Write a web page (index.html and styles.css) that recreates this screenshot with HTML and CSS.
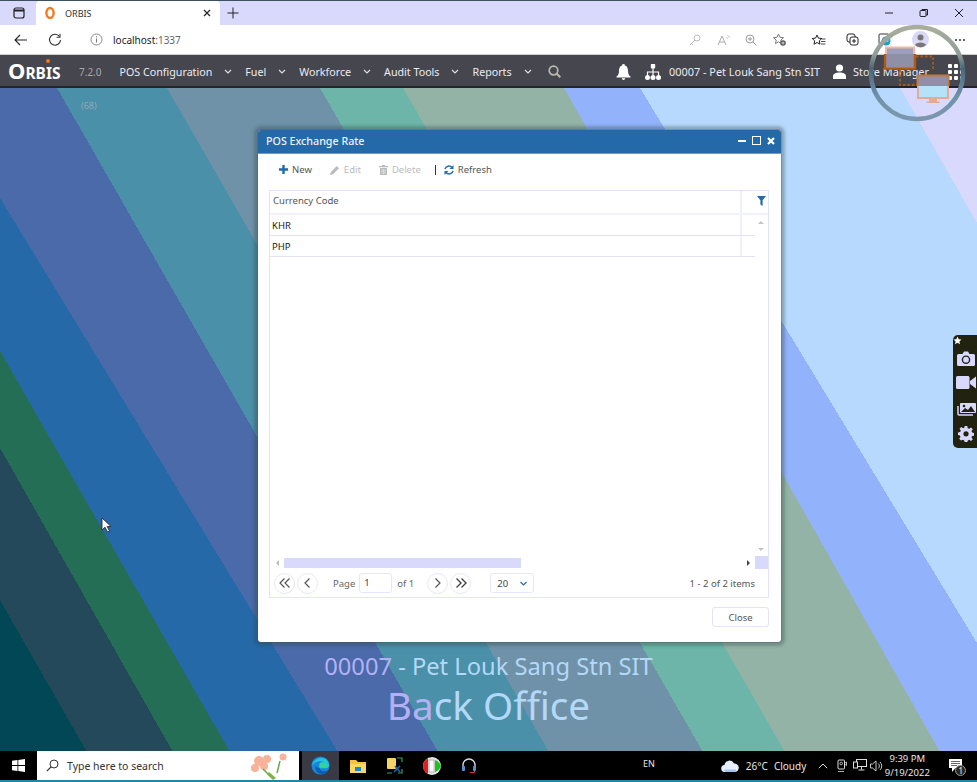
FILE: index.html
```html
<!DOCTYPE html>
<html lang="en">
<head>
<meta charset="utf-8">
<title>ORBIS</title>
<link rel="stylesheet" href="styles.css">
</head>
<body>
<div class="screen">
  <header class="tabstrip">
    <svg class="ts-panel" width="12" height="12" viewBox="0 0 12 12"><rect x="1" y="1" width="10" height="10" rx="2" fill="none" stroke="#222" stroke-width="1.2"/><path d="M1 3.5h10" stroke="#222" stroke-width="2"/></svg>
    <div class="tab">
      <svg class="tab-o" width="12" height="14" viewBox="0 0 12 14"><ellipse cx="6" cy="7" rx="3.6" ry="5" fill="none" stroke="#f47a20" stroke-width="2.4"/></svg>
      <span class="tab-title">ORBIS</span>
      <svg class="tab-x" width="8" height="8" viewBox="0 0 8 8"><path d="M1 1l6 6M7 1l-6 6" stroke="#222" stroke-width="1.2"/></svg>
    </div>
    <svg class="ts-plus" width="12" height="12" viewBox="0 0 12 12"><path d="M6 .5v11M.5 6h11" stroke="#222" stroke-width="1"/></svg>
    <div class="winctl">
      <svg width="10" height="10" viewBox="0 0 10 10"><path d="M1 5h8" stroke="#222"/></svg>
      <svg width="10" height="10" viewBox="0 0 10 10"><rect x="1" y="2.5" width="6" height="6" rx="1" fill="none" stroke="#222"/><path d="M3 2.5V1.5h5.5V7H7" fill="none" stroke="#222"/></svg>
      <svg width="10" height="10" viewBox="0 0 10 10"><path d="M1 1l8 8M9 1l-8 8" stroke="#222"/></svg>
    </div>
  </header>

  <div class="addressbar">
    <svg class="ab-back" width="14" height="12" viewBox="0 0 14 12"><path d="M13 6H1M6 1L1 6l5 5" fill="none" stroke="#222" stroke-width="1.1"/></svg>
    <svg class="ab-reload" width="14" height="14" viewBox="0 0 14 14"><path d="M11.5 3.5A5.5 5.5 0 1 0 12.5 7" fill="none" stroke="#333" stroke-width="1.1"/><path d="M12 .8v3.4H8.6" fill="none" stroke="#333" stroke-width="1.1"/></svg>
    <svg class="ab-info" width="13" height="13" viewBox="0 0 13 13"><circle cx="6.5" cy="6.5" r="5.5" fill="none" stroke="#888"/><path d="M6.5 5.5v4M6.5 3.2v1.2" stroke="#777"/></svg>
    <span class="url">localhost<span class="url-port">:1337</span></span>
    <div class="ab-tools">
      <svg class="t-key" width="12" height="12" viewBox="0 0 12 12"><circle cx="8" cy="4" r="3" fill="none" stroke="#bbb"/><path d="M6 6L1 11M2.500 9.500l1.500 1.500" stroke="#bbb" fill="none"/></svg>
      <svg class="t-a" width="14" height="12" viewBox="0 0 14 12"><path d="M1 11L5 2l4 9M2.500 8h5" fill="none" stroke="#aaa"/><path d="M9 3a3 3 0 0 1 2 2M10 1a5 5 0 0 1 3 3" fill="none" stroke="#bbb" stroke-width=".8"/></svg>
      <svg class="t-zoom" width="12" height="12" viewBox="0 0 12 12"><circle cx="5" cy="5" r="4" fill="none" stroke="#999"/><path d="M8 8l3.500 3.500M3 5h4M5 3v4" stroke="#999"/></svg>
      <svg class="t-fav" width="13" height="13" viewBox="0 0 13 13"><path d="M5.500 1l1.500 3.300 3.500.4-2.600 2.400.7 3.500-3.100-1.800-3 1.800.7-3.500L.5 4.700 4 4.300z" fill="none" stroke="#777"/><circle cx="10" cy="10" r="2.800" fill="#555"/><path d="M8.500 10h3M10 8.500v3" stroke="#fff" stroke-width=".7"/></svg>
      <svg class="t-favs" width="14" height="12" viewBox="0 0 14 12"><path d="M5 1l1.400 3.100 3.400.4-2.500 2.300.7 3.400L5 8.500 2 10.200l.7-3.400L.2 4.500l3.400-.4z" fill="none" stroke="#222"/><path d="M9.500 5H13.500M9 7.500h4.500M9 10h4.500" stroke="#222" stroke-width=".8"/></svg>
      <svg class="t-coll" width="13" height="13" viewBox="0 0 13 13"><rect x="1" y="1" width="8" height="8" rx="2" fill="none" stroke="#222"/><rect x="4" y="4" width="8" height="8" rx="2" fill="#fff" stroke="#222"/><path d="M8 6v4M6 8h4" stroke="#222"/></svg>
      <svg class="t-ie" width="14" height="14" viewBox="0 0 14 14"><rect x="1" y="1" width="10" height="10" rx="1" fill="none" stroke="#333"/><circle cx="8" cy="8" r="4.500" fill="#1b9ad6"/><path d="M5.500 8h5" stroke="#fff"/></svg>
      <svg class="t-prof" width="17" height="17" viewBox="0 0 17 17"><circle cx="8.500" cy="8.500" r="8.500" fill="#d9d9f5"/><circle cx="8.500" cy="6.500" r="3" fill="#777"/><path d="M3 14c1-3.500 10-3.500 11 0a8 8 0 0 1-11 0z" fill="#777"/></svg>
      <svg class="t-more" width="12" height="4" viewBox="0 0 12 4"><g fill="#333"><circle cx="2" cy="2" r="1"/><circle cx="6" cy="2" r="1"/><circle cx="10" cy="2" r="1"/></g></svg>
    </div>
  </div>

  <nav class="appnav">
    <div class="logo">O<span class="logo-rest">RBIS</span><i class="logo-dot"></i></div>
    <span class="version">7.2.0</span>
    <div class="menu">
      <a class="menu-item">POS Configuration<svg class="chev" width="8" height="5" viewBox="0 0 8 5"><path d="M1 1l3 3 3-3" fill="none" stroke="#ddd" stroke-width="1.2"/></svg></a>
      <a class="menu-item">Fuel<svg class="chev" width="8" height="5" viewBox="0 0 8 5"><path d="M1 1l3 3 3-3" fill="none" stroke="#ddd" stroke-width="1.2"/></svg></a>
      <a class="menu-item">Workforce<svg class="chev" width="8" height="5" viewBox="0 0 8 5"><path d="M1 1l3 3 3-3" fill="none" stroke="#ddd" stroke-width="1.2"/></svg></a>
      <a class="menu-item">Audit Tools<svg class="chev" width="8" height="5" viewBox="0 0 8 5"><path d="M1 1l3 3 3-3" fill="none" stroke="#ddd" stroke-width="1.2"/></svg></a>
      <a class="menu-item">Reports<svg class="chev" width="8" height="5" viewBox="0 0 8 5"><path d="M1 1l3 3 3-3" fill="none" stroke="#ddd" stroke-width="1.2"/></svg></a>
      <svg class="nav-search" width="13" height="13" viewBox="0 0 13 13"><circle cx="5.500" cy="5.500" r="4.300" fill="none" stroke="#b9b9a8" stroke-width="1.700"/><path d="M8.500 8.500l3.800 3.800" stroke="#b9b9a8" stroke-width="2"/></svg>
    </div>
    <div class="nav-right">
      <svg class="nav-bell" width="15" height="16" viewBox="0 0 15 16"><path d="M7.500 0a1.300 1.300 0 0 1 1.300 1.500C11.500 2.200 12 5 12 7c0 3 1 4.500 2.500 5.500v1H.5v-1C2 11.500 3 10 3 7c0-2 .5-4.800 3.200-5.500A1.300 1.300 0 0 1 7.500 0zM5.800 14.300h3.400a1.700 1.700 0 0 1-3.400 0z" fill="#fff"/></svg>
      <svg class="nav-org" width="16" height="16" viewBox="0 0 16 16"><g fill="#fff"><rect x="5.800" y="0" width="4.400" height="4.400" rx=".8"/><circle cx="2.500" cy="13.500" r="2.500"/><circle cx="8" cy="13.500" r="2.500"/><circle cx="13.500" cy="13.500" r="2.500"/></g><path d="M8 4v7M2.500 11V8h11v3" fill="none" stroke="#fff" stroke-width="1.200"/></svg>
      <span class="nav-store">00007 - Pet Louk Sang Stn SIT</span>
      <svg class="nav-user" width="13" height="15" viewBox="0 0 13 15"><circle cx="6.500" cy="4" r="3.600" fill="#fff"/><path d="M0 15v-2.500C0 9.500 3 8.500 6.500 8.500S13 9.500 13 12.500V15z" fill="#fff"/></svg>
      <span class="nav-role">Store Manager</span>
      <div class="nav-apps"><i></i><i></i><i></i><i></i><i></i><i></i><i></i><i></i><i></i></div>
    </div>
  </nav>

  <main class="desktop">
    <svg class="wallpaper" viewBox="0 0 977 664" preserveAspectRatio="none" shape-rendering="crispEdges">
      <rect width="977" height="664" fill="#d9d8fd"/>
      <polygon points="0,0 900,0 977,135 977,664 0,664" fill="#b6d9fd"/>
      <polygon points="0,0 640,0 977,555 977,664 0,664" fill="#92b2fb"/>
      <polygon points="0,0 564,0 940,664 0,664" fill="#93b3a7"/>
      <polygon points="0,0 403,0 785,664 0,664" fill="#6cb5a8"/>
      <polygon points="0,0 320,0 703,664 0,664" fill="#6f92a9"/>
      <polygon points="0,0 167,0 549,664 0,664" fill="#4a90a9"/>
      <polygon points="0,0 57,0 438,664 0,664" fill="#4a6aa9"/>
      <polygon points="0,110 338,664 0,664" fill="#2569a9"/>
      <polygon points="0,263 230,664 0,664" fill="#246e55"/>
      <polygon points="0,360 173,664 0,664" fill="#24495a"/>
      <polygon points="0,512 87,664 0,664" fill="#024755"/>
    </svg>

    <span class="count">(68)</span>

    <div class="brand">
      <div class="brand-store"><span class="tint">00007</span> - Pet Louk Sang Stn SIT</div>
      <div class="brand-app"><span class="tint">Ba</span>ck Office</div>
    </div>

    <section class="dialog">
      <div class="dlg-head">
        <span class="dlg-title">POS Exchange Rate</span>
        <div class="dlg-ctl">
          <svg width="8" height="8" viewBox="0 0 8 8"><path d="M0 4h8" stroke="#fff" stroke-width="2"/></svg>
          <svg width="9" height="9" viewBox="0 0 9 9"><rect x=".5" y=".5" width="8" height="8" fill="none" stroke="#fff"/></svg>
          <svg width="8" height="8" viewBox="0 0 8 8"><path d="M1 1l6 6M7 1l-6 6" stroke="#fff" stroke-width="2.200"/></svg>
        </div>
      </div>
      <div class="dlg-body">
        <div class="actions">
          <span class="act"><svg width="9" height="9" viewBox="0 0 9 9"><path d="M4.500 0v9M0 4.500h9" stroke="#246aa8" stroke-width="2.400"/></svg>New</span>
          <span class="act off"><svg width="10" height="10" viewBox="0 0 10 10"><path d="M0 10l.8-3L6.800 1 9 3.200l-6 6z" fill="#bbb"/></svg>Edit</span>
          <span class="act off"><svg width="9" height="10" viewBox="0 0 9 10"><path d="M3 0h3v1h3v1.200H0V1h3zM1 3h7v7H1z" fill="#bbb"/><path d="M3 4v5M4.500 4v5M6 4v5" stroke="#fff" stroke-width=".5"/></svg>Delete</span>
          <i class="act-sep"></i>
          <span class="act"><svg width="10" height="10" viewBox="0 0 10 10"><path d="M1 4.200A4 4 0 0 1 8 2.500M9 5.800A4 4 0 0 1 2 7.500" fill="none" stroke="#246aa8" stroke-width="1.500"/><path d="M9.500 0v4h-4zM.5 10V6h4z" fill="#246aa8"/></svg>Refresh</span>
        </div>

        <div class="grid">
          <div class="grid-head">
            <span class="cell-head">Currency Code</span>
            <span class="filter-cell"><svg width="9" height="10" viewBox="0 0 9 10"><path d="M0 0h9L5.600 4.200V10L3.400 8.500V4.200z" fill="#246aa8"/></svg></span>
          </div>
          <div class="grid-main">
            <div class="rows">
              <div class="row"><span class="cell">KHR</span><span class="cell-fill"></span></div>
              <div class="row"><span class="cell">PHP</span><span class="cell-fill"></span></div>
            </div>
            <div class="vscroll"><i class="arr-up"></i><i class="arr-down"></i></div>
          </div>
          <div class="hscroll">
            <i class="arr-left"></i>
            <span class="thumb-track"><i class="thumb"></i></span>
            <i class="arr-right"></i>
            <i class="corner"></i>
          </div>
          <div class="pager">
            <button class="pg"><svg width="12" height="10" viewBox="0 0 12 10"><path d="M5.500 .5L1 5l4.500 4.500M10.500 .5L6 5l4.500 4.500" fill="none" stroke="#555" stroke-width="1.200"/></svg></button>
            <button class="pg"><svg width="7" height="10" viewBox="0 0 7 10"><path d="M5.500 .5L1 5l4.500 4.500" fill="none" stroke="#555" stroke-width="1.200"/></svg></button>
            <span class="pg-label">Page</span>
            <span class="pg-input">1</span>
            <span class="pg-of">of 1</span>
            <button class="pg pg-next"><svg width="7" height="10" viewBox="0 0 7 10"><path d="M1.500 .5L6 5l-4.500 4.500" fill="none" stroke="#555" stroke-width="1.200"/></svg></button>
            <button class="pg"><svg width="12" height="10" viewBox="0 0 12 10"><path d="M1.500 .5L6 5l-4.500 4.500M6.500 .5L11 5l-4.500 4.500" fill="none" stroke="#444" stroke-width="1.400"/></svg></button>
            <span class="pg-size">20<svg width="7" height="5" viewBox="0 0 7 5"><path d="M.5 1L3.500 4 6.500 1" fill="none" stroke="#246aa8" stroke-width="1.200"/></svg></span>
            <span class="pg-info">1 - 2 of 2 items</span>
          </div>
        </div>

        <div class="dlg-foot"><button class="btn-close">Close</button></div>
      </div>
    </section>

    <aside class="sidetools">
      <span class="st-pin"><svg width="9" height="9" viewBox="0 0 9 9"><path d="M4.500 .5l1.200 2.700 2.800.3-2.100 1.900.6 2.800-2.500-1.400-2.500 1.400.6-2.800L.5 3.500l2.800-.3z" fill="#fff"/></svg></span>
      <svg width="18" height="15" viewBox="0 0 18 15"><path d="M1.500 3h4l1.500-2.500h4L12.500 3h4A1.500 1.500 0 0 1 18 4.500v9a1.500 1.500 0 0 1-1.500 1.500h-15A1.500 1.500 0 0 1 0 13.500v-9A1.500 1.500 0 0 1 1.500 3z" fill="#d9d8fd"/><circle cx="9" cy="8.700" r="3.600" fill="none" stroke="#222210" stroke-width="1.400"/></svg>
      <svg width="20" height="13" viewBox="0 0 20 13"><rect width="13.500" height="13" rx="1.500" fill="#d9d8fd"/><path d="M14 5l6-4.500v12L14 8z" fill="#d9d8fd"/></svg>
      <svg width="19" height="16" viewBox="0 0 19 16"><path d="M4 3h14a1 1 0 0 1 1 1v8a1 1 0 0 1-1 1H4a1 1 0 0 1-1-1V4a1 1 0 0 1 1-1z" fill="#d9d8fd"/><path d="M4 12l4-4 3 2 3-4 4 6z" fill="#222210"/><circle cx="7" cy="6" r="1.300" fill="#222210"/><path d="M1 6v8a1 1 0 0 0 1 1h14" fill="none" stroke="#d9d8fd" stroke-width="1.500"/></svg>
      <svg width="16" height="16" viewBox="0 0 16 16"><path d="M6.700 0h2.600l.4 2.200 1.500.6 1.800-1.300 1.800 1.800-1.300 1.800.6 1.500 2.200.4v2.600l-2.200.4-.6 1.500 1.300 1.800-1.800 1.800-1.800-1.300-1.500.6-.4 2.200H6.700l-.4-2.200-1.500-.6L3 14.500l-1.800-1.800 1.300-1.800-.6-1.500L0 9V6.400l2.200-.4.600-1.500L1.500 2.700 3.300.9l1.800 1.300 1.200-.5z" fill="#d9d8fd"/><circle cx="8" cy="7.800" r="2.600" fill="#222210"/></svg>
    </aside>

    <svg class="cursor" width="11" height="16" viewBox="0 0 11 16"><path d="M1 1v12l3-2.800L6.500 15l2-1-2.300-4.500H10z" fill="#fff" stroke="#222" stroke-width=".8"/></svg>
  </main>

  <footer class="taskbar">
    <svg class="tb-win" width="13" height="13" viewBox="0 0 13 13"><path d="M0 1.800L5.500 1v5H0zM6.300.9L13 0v6H6.300zM0 7h5.500v5L0 11.200zM6.300 7H13v6l-6.700-.9z" fill="#fff"/></svg>
    <div class="tb-search">
      <svg width="13" height="13" viewBox="0 0 13 13"><circle cx="8" cy="5" r="4" fill="none" stroke="#333"/><path d="M5 8l-4.200 4.200" stroke="#333" stroke-width="1.100"/></svg>
      <span class="tb-search-text">Type here to search</span>
      <svg class="tb-flower" width="46" height="27" viewBox="0 0 46 27"><g fill="#f6b39a"><circle cx="14" cy="8" r="5"/><circle cx="22" cy="6" r="4"/><circle cx="10" cy="15" r="4"/><circle cx="19" cy="13" r="4"/><circle cx="38" cy="4" r="3.500"/></g><path d="M18 16l9 9M35 8l-3 12" stroke="#6aa84f" stroke-width="1.500" fill="none"/><path d="M24 19l7 6-3 2-6-6z" fill="#7cb342"/></svg>
    </div>
    <div class="tb-app tb-active">
      <svg width="19" height="19" viewBox="0 0 20 20"><circle cx="10" cy="10" r="9.500" fill="#1787d8"/><path d="M1 10C2 4 9 0 15 3c3 2 4 5 4 7 0 2-2 3-4 3H9c-1-3 1-6 5-6-4-3-10-1-13 3z" fill="#22c3e6"/><path d="M9 12.500c.5 3 5 5 9 2.500-2 4-6 4.500-9 3.500-3-1-5-4-4-8 .5 1 2 2 4 2z" fill="#0c5fb0"/><path d="M9 8c1-2 5-2 7 0 1 1 2 3 1 4H9.500C8.500 11 8.500 9 9 8z" fill="#36d29c"/></svg>
    </div>
    <div class="tb-app">
      <svg width="16" height="14" viewBox="0 0 16 14"><path d="M0 1h6l2 2h8v11H0z" fill="#f5c242"/><path d="M0 5h16v9H0z" fill="#fbd766"/><rect x="5" y="8" width="6" height="4" fill="#1b87c9"/></svg>
    </div>
    <div class="tb-app">
      <svg width="17" height="17" viewBox="0 0 17 17"><rect x="1" y="1" width="9" height="11" rx="1" fill="#f5d36a"/><path d="M11 1h5v4M1 16h5M16 12v4h-4" fill="none" stroke="#2f9e6a" stroke-width="1.200"/><path d="M8 15l6-6M9 9l5 6" stroke="#1b5fa8" stroke-width="1.600"/></svg>
    </div>
    <div class="tb-app">
      <svg width="18" height="18" viewBox="0 0 18 18"><circle cx="9" cy="9" r="9" fill="#e8e8e8"/><path d="M9 0a9 9 0 0 0-9 9 9 9 0 0 0 5 8V0z" fill="#e02020"/><path d="M12 3a9 9 0 0 1 6 6 9 9 0 0 1-6 6z" fill="#20c020"/><rect x="6" y="3" width="5" height="12" fill="#fff" stroke="#888" stroke-width=".6"/></svg>
    </div>
    <div class="tb-app">
      <svg width="16" height="18" viewBox="0 0 16 18"><path d="M2 11V8a6 6 0 0 1 12 0v3" fill="none" stroke="#d8d8e8" stroke-width="1.400"/><rect x="1" y="9" width="3" height="5" rx="1" fill="#5b8fd8"/><rect x="12" y="9" width="3" height="5" rx="1" fill="#5b8fd8"/><path d="M13.500 14v1.500H9" fill="none" stroke="#d84040"/></svg>
    </div>
    <span class="tb-lang">EN</span>
    <svg class="tb-cloud" width="18" height="12" viewBox="0 0 18 12"><path d="M4 12a3.500 3.500 0 0 1-.5-7A5 5 0 0 1 13 3.500 4.200 4.200 0 0 1 14 12z" fill="#e8f0fc"/><path d="M3 9.500h12V12H4a3.500 3.500 0 0 1-1-2.500z" fill="#9cc6f5"/></svg>
    <span class="tb-temp">26°C</span>
    <span class="tb-weather">Cloudy</span>
    <svg class="tb-tray-chev" width="10" height="6" viewBox="0 0 10 6"><path d="M.8 5.200L5 1l4.200 4.200" fill="none" stroke="#ddd"/></svg>
    <svg class="tb-meet" width="10" height="14" viewBox="0 0 10 14"><rect x="1" y="1" width="6.500" height="9" rx="1" fill="none" stroke="#ddd"/><circle cx="4.200" cy="4.500" r="1.300" fill="none" stroke="#ddd" stroke-width=".8"/><path d="M8 4l1.500-1v3.500L8 5.500M1 12.500h6" fill="none" stroke="#ddd" stroke-width=".8"/></svg>
    <svg class="tb-net" width="14" height="13" viewBox="0 0 14 13"><rect x="3.500" y=".5" width="10" height="7" fill="none" stroke="#ddd"/><rect x=".5" y="3" width="4" height="6" fill="#000" stroke="#ddd"/><path d="M8.500 8v2.500M5.500 11h6" stroke="#ddd"/></svg>
    <svg class="tb-vol" width="13" height="12" viewBox="0 0 13 12"><path d="M.5 4h2L6 1v10L2.500 8h-2z" fill="none" stroke="#ddd" stroke-width=".9"/><path d="M8 3.500a3 3 0 0 1 0 5M10 2a5.500 5.500 0 0 1 0 8" fill="none" stroke="#ddd" stroke-width=".9"/></svg>
    <div class="tb-clock"><span>9:39 PM</span><span>9/19/2022</span></div>
    <div class="tb-notif">
      <svg width="13" height="13" viewBox="0 0 13 13"><path d="M0 0h13v9H6.500L3 13V9H0z" fill="#fff"/><path d="M2 2.500h9M2 4.500h9M2 6.500h6" stroke="#000" stroke-width=".6"/></svg>
      <span class="tb-badge">1</span>
    </div>
  </footer>

  <svg class="overlay-logo" width="100" height="100" viewBox="0 0 100 100">
    <defs>
      <linearGradient id="ring" x1="0" y1="0" x2="0" y2="1">
        <stop offset="0" stop-color="#a9ad9e"/><stop offset=".3" stop-color="#8f9e96"/>
        <stop offset=".45" stop-color="#4b6678"/><stop offset=".75" stop-color="#6f92a9"/><stop offset="1" stop-color="#7d97ad"/>
      </linearGradient>
    </defs>
    <circle cx="50" cy="50" r="46" fill="none" stroke="url(#ring)" stroke-width="4.500"/>
    <rect x="19" y="24.500" width="28" height="20" fill="#9d9dbd" stroke="#f0b8a0" stroke-width="2"/>
    <rect x="19" y="31" width="28" height="13" fill="#8f8fa8"/>
    <path d="M18 31v14.500h30V31" fill="none" stroke="#b15a10" stroke-width="2.400"/>
    <path d="M49 33.500H66V46M33 47V62H50" fill="none" stroke="#b15a10" stroke-width="1.800" stroke-dasharray="2.500 2"/>
    <rect x="51" y="53" width="30" height="22" fill="#b5e2f8" stroke="#e5ab92" stroke-width="2"/>
    <rect x="51" y="53" width="30" height="10" fill="#8f8fa8"/>
    <path d="M50.500 63V52.500H81.500V63" fill="none" stroke="#c47a3c" stroke-width="2"/>
    <path d="M62 76h8v2.500h2.500V80h-13v-1.500H62z" fill="#e5ab92"/>
  </svg>
</div>
</body>
</html>
```
FILE: styles.css
```css
* { box-sizing: border-box; }
html, body { margin: 0; padding: 0; }
body {
  width: 977px;
  height: 782px;
  overflow: hidden;
  font-family: "Noto Sans", sans-serif;
  font-size: 10px;
  color: #444;
}
svg { flex: none; display: block; }
button { font-family: inherit; }

.screen { position: relative; width: 977px; height: 782px; display: flex; flex-direction: column; overflow: hidden; }

/* Tab strip */
.tabstrip {
  height: 25px;
  flex: none;
  background: #d9d9fc;
  border-top: 1px solid #3d5060;
  display: flex;
  align-items: center;
  padding-left: 13px;
}
.tab {
  width: 184px;
  height: 24px;
  margin-left: 11px;
  background: #fff;
  border-radius: 4px 4px 0 0;
  display: flex;
  align-items: center;
  padding: 0 9px 0 8px;
}
.tab-o { margin-right: 9px; }
.tab-title { font-size: 9px; color: #333; flex: 1; }
.ts-plus { margin-left: 7px; }
.winctl { margin-left: auto; display: flex; gap: 25px; padding-right: 13px; }

/* Address bar */
.addressbar {
  height: 30px;
  flex: none;
  background: #fff;
  border-bottom: 1px solid #cfcfc8;
  display: flex;
  align-items: center;
  padding-left: 14px;
}
.ab-reload { margin-left: 20px; }
.ab-info { margin-left: 28px; }
.url { margin-left: 10px; font-size: 10px; color: #222; }
.url-port { color: #666; }
.ab-tools { margin-left: auto; display: flex; align-items: center; }
.t-key { margin-right: 16px; }
.t-a { margin-right: 14px; }
.t-zoom { margin-right: 16px; }
.t-fav { margin-right: 26px; }
.t-favs { margin-right: 20px; }
.t-coll { margin-right: 19px; }
.t-ie { margin-right: 20px; }
.t-prof { margin-right: 25px; }
.t-more { margin-right: 11px; }

/* App nav */
.appnav {
  height: 33px;
  flex: none;
  background: #46464f;
  border-bottom: 2px solid #23232a;
  display: flex;
  align-items: center;
  padding: 2px 0 0 8px;
  color: #ececf2;
  font-size: 10.7px;
}
.logo {
  position: relative;
  width: 53px;
  font-size: 22px;
  font-weight: 700;
  line-height: 24px;
  color: #fff;
}
.logo-rest { font-size: 15.5px; font-weight: 700; }
.logo-dot {
  position: absolute;
  left: 38px;
  top: 1px;
  width: 4px;
  height: 4px;
  border-radius: 50%;
  background: #f47a20;
}
.version { margin-left: 18px; font-size: 10px; color: #a8a8a8; }
.menu { display: flex; align-items: center; margin-left: 18px; }
.menu-item { display: flex; align-items: center; gap: 12px; margin-right: 13px; white-space: nowrap; }
.nav-search { margin-left: 3px; }
.nav-right { display: flex; align-items: center; margin-left: auto; padding-right: 13px; font-size: 10.9px; }
.nav-org { margin-left: 14px; }
.nav-store { margin-left: 8px; white-space: nowrap; }
.nav-user { margin-left: 13px; }
.nav-role { margin-left: 7px; white-space: nowrap; }
.nav-apps {
  margin-left: 19px;
  display: grid;
  grid-template-columns: repeat(3, 4px);
  gap: 2px;
}
.nav-apps i { width: 4px; height: 4px; background: #fff; border-radius: 1px; }

/* Desktop */
.desktop { position: relative; flex: 1; min-height: 0; overflow: hidden; }
.wallpaper { position: absolute; left: 0; top: 0; width: 977px; height: 664px; }
.count { position: absolute; left: 81px; top: 11px; font-size: 9px; color: #8eaaba; }

.brand { position: absolute; left: 0; right: 0; top: 563px; text-align: center; color: #b3d8f8; }
.brand-store { font-size: 23.7px; line-height: 30px; }
.brand-app { font-size: 38.7px; line-height: 48px; }
.tint { color: #b4b0f4; }

.dialog {
  position: absolute;
  left: 258px;
  top: 42px;
  width: 523px;
  height: 512px;
  background: #fff;
  border-radius: 3px;
  box-shadow: 0 0 0 1px rgba(60, 80, 80, .25), 0 0 3px 4px rgba(50, 70, 70, .33);
  display: flex;
  flex-direction: column;
}
.dlg-head {
  height: 24px;
  flex: none;
  background: #246aa8;
  border-bottom: 1px solid #6aa0c8;
  border-radius: 3px 3px 0 0;
  display: flex;
  align-items: center;
  padding: 0 6px 2px 8px;
  color: #f2f2fa;
}
.dlg-title { font-size: 10.7px; font-weight: 500; flex: 1; }
.dlg-ctl { display: flex; align-items: center; gap: 6px; }
.dlg-body { flex: 1; min-height: 0; display: flex; flex-direction: column; padding: 0 12px 15px 11px; }

.actions { height: 36px; flex: none; display: flex; align-items: center; padding: 0 0 5px 10px; font-size: 9.5px; color: #555; }
.act { display: flex; align-items: center; gap: 4px; margin-right: 18px; }
.act.off { color: #bbb; }
.act-sep { width: 1px; height: 10px; background: #333; margin-right: 8px; margin-left: -4px; }

.grid { height: 408px; flex: none; border: 1px solid #e3e3fb; display: flex; flex-direction: column; }
.grid-head { height: 24px; flex: none; display: flex; border-bottom: 2px solid #f2f2fe; }
.cell-head { flex: 1; padding: 3px 0 0 3px; font-size: 9.5px; color: #555; }
.filter-cell { width: 28px; border-left: 2px solid #efeffd; display: flex; justify-content: flex-end; padding: 5px 2px 0 0; }
.grid-main { flex: 1; min-height: 0; display: flex; }
.rows { flex: 1; }
.row { height: 21px; display: flex; align-items: stretch; border-bottom: 1px solid #e2e1f5; }
.cell { flex: 1; padding-left: 2px; font-size: 9.5px; line-height: 21px; color: #222; }
.cell-fill { width: 15px; border-left: 2px solid #efeffd; }
.vscroll { width: 13px; position: relative; }
.arr-up, .arr-down, .arr-left, .arr-right { display: block; width: 0; height: 0; border-style: solid; }
.arr-up { position: absolute; left: 3px; top: 6px; border-width: 0 3px 3px; border-color: transparent transparent #c4c4bc; }
.arr-down { position: absolute; left: 3px; bottom: 5px; border-width: 3px 3px 0; border-color: #c4c4bc transparent transparent; }

.hscroll { height: 13px; flex: none; display: flex; align-items: center; }
.arr-left { margin-left: 6px; border-width: 3px 3px 3px 0; border-color: transparent #bcbcb4 transparent transparent; }
.thumb-track { flex: 1; margin-left: 5px; height: 10px; }
.thumb { display: block; width: 237px; height: 10px; background: #d9d9fc; }
.arr-right { margin-right: 5px; border-width: 3px 0 3px 3px; border-color: transparent transparent transparent #444; }
.corner { width: 13px; height: 13px; background: #d9d9fc; }

.pager { height: 28px; flex: none; display: flex; align-items: center; padding: 0 13px 0 4px; font-size: 9.5px; color: #666; }
.pg {
  width: 21px;
  height: 21px;
  flex: none;
  padding: 0;
  margin-right: 2px;
  border: 1px solid #e6e6fb;
  border-radius: 50%;
  background: #fff;
  display: flex;
  align-items: center;
  justify-content: center;
}
.pg-label { margin-left: 13px; }
.pg-input { width: 33px; height: 20px; margin-left: 4px; border: 1px solid #e6e6fb; border-radius: 3px; padding: 2px 0 0 4px; color: #444; }
.pg-of { margin-left: 5px; }
.pg-next { margin-left: 13px; }
.pg-size {
  width: 44px;
  height: 20px;
  margin-left: 17px;
  border: 1px solid #e6e6fb;
  border-radius: 3px;
  display: flex;
  align-items: center;
  justify-content: space-between;
  padding: 0 6px 0 6px;
  color: #444;
}
.pg-info { margin-left: auto; color: #555; }

.dlg-foot { flex: 1; display: flex; justify-content: flex-end; align-items: flex-end; }
.btn-close { width: 57px; height: 20px; padding: 0; border: 1px solid #e3e3fb; border-radius: 3px; background: #fff; font-size: 9.5px; color: #555; }

.sidetools {
  position: absolute;
  right: 0;
  top: 247px;
  width: 24px;
  height: 113px;
  background: #222210;
  border-radius: 5px 0 0 5px;
  display: flex;
  flex-direction: column;
  align-items: center;
  justify-content: space-around;
  padding: 11px 0 1px 2px;
}
.st-pin { position: absolute; left: 0; top: 1px; }
.cursor { position: absolute; left: 101px; top: 429px; }

/* Taskbar */
.taskbar {
  height: 31px;
  flex: none;
  background: #000;
  border-bottom: 2px solid #1f88a0;
  display: flex;
  align-items: center;
  color: #e6e6e6;
  font-size: 10px;
}
.tb-win { margin-left: 12px; }
.tb-search {
  width: 262px;
  height: 29px;
  flex: none;
  margin-left: 12px;
  background: #fff;
  display: flex;
  align-items: center;
  padding-left: 9px;
  color: #333;
  position: relative;
}
.tb-search-text { margin-left: 8px; font-size: 10.5px; }
.tb-flower { position: absolute; right: 8px; top: 2px; }
.tb-app { width: 37px; height: 29px; flex: none; display: flex; align-items: center; justify-content: center; }
.tb-active { margin-left: 3px; background: #3a3a45; }
.tb-lang { margin-left: 156px; font-size: 9px; padding-bottom: 4px; }
.tb-cloud { margin-left: 66px; }
.tb-temp { margin-left: 7px; }
.tb-weather { margin-left: 6px; }
.tb-tray-chev { margin-left: 12px; }
.tb-meet { margin-left: 9px; }
.tb-net { margin-left: 6px; }
.tb-vol { margin-left: 3px; }
.tb-clock { margin-left: 1px; width: 46px; flex: none; display: flex; flex-direction: column; align-items: center; line-height: 14px; font-size: 9.5px; white-space: nowrap; }
.tb-notif { position: relative; margin-left: 19px; }
.tb-badge {
  position: absolute;
  left: 6px;
  top: 6px;
  width: 11px;
  height: 11px;
  border-radius: 50%;
  background: #2a2a1c;
  border: 1px solid #999;
  color: #fff;
  font-size: 8px;
  line-height: 9px;
  text-align: center;
}

.overlay-logo { position: absolute; left: 867px; top: 23px; }
```
